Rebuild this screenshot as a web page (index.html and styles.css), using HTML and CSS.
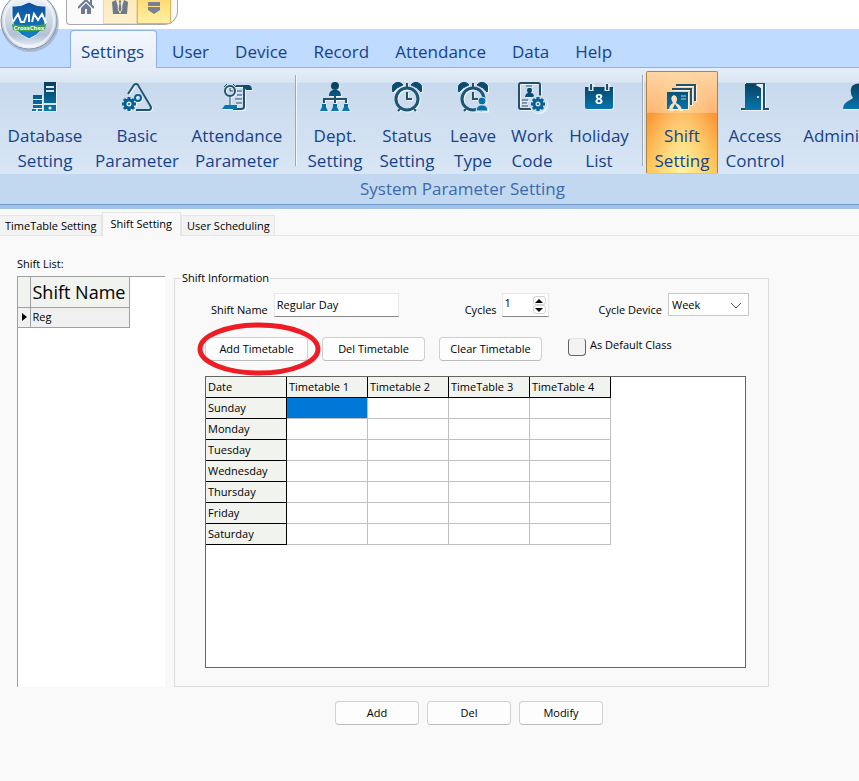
FILE: index.html
```html
<!DOCTYPE html>
<html lang="en">
<head>
    <meta charset="utf-8">
    <title>Shift Setting</title>
    <link rel="stylesheet" href="styles.css">
</head>
<body>
    <svg width="0" height="0" class="defs" aria-hidden="true">
        <defs>
            <linearGradient id="blue" gradientUnits="userSpaceOnUse" x1="0" y1="2" x2="0" y2="30">
                <stop offset="0" stop-color="#08405f"/>
                <stop offset="1" stop-color="#0778b4"/>
            </linearGradient>
            <linearGradient id="shield" x1="0" y1="0" x2="0" y2="1">
                <stop offset="0" stop-color="#0e4f9c"/>
                <stop offset="1" stop-color="#1583c9"/>
            </linearGradient>
            <linearGradient id="orb" x1="0" y1="0" x2="0" y2="1">
                <stop offset="0" stop-color="#f6f8fb"/>
                <stop offset="0.5" stop-color="#ccd6e5"/>
                <stop offset="0.75" stop-color="#b3c1d6"/>
                <stop offset="1" stop-color="#f2f7fc"/>
            </linearGradient>
            <g id="clock">
                <circle cx="15" cy="18" r="11" fill="none" stroke="#1d5674" stroke-width="3"/>
                <path d="M1 11a6 6 0 0 1 10-7q-6 2-10 7zM29 11a6 6 0 0 0-10-7q6 2 10 7z" fill="#0b4b70" stroke="#0b4b70"/>
                <path d="M15 2v4M15 11v7h5M8 28l-2 2M22 28l2 2" fill="none" stroke="#24516a" stroke-width="2"/>
            </g>
            <g id="person">
                <circle cx="6" cy="4" r="4"/>
                <path d="M0 14q0-5 4-6h4q4 1 4 6z"/>
            </g>
            <g id="gear">
                <circle cx="7" cy="7" r="4" fill="none" stroke-width="3"/>
                <path d="M7 0v3M7 11v3M0 7h3M11 7h3M2 2l2 2M10 10l2 2M2 12l2-2M10 4l2-2" stroke-width="3"/>
                <circle cx="7" cy="7" r="1" stroke="none" fill="#076190"/>
            </g>
        </defs>
    </svg>

    <header class="ribbon">
        <div class="quick-bar">
            <button class="orb" aria-label="Application menu">
                <svg width="62" height="54" viewBox="0 0 62 54">
                    <circle cx="30" cy="23" r="29" fill="#8d97a5" opacity="0.5"/>
                    <circle cx="29" cy="21" r="28" fill="url(#orb)" stroke="#8996aa"/>
                    <circle cx="29" cy="21" r="25" fill="none" stroke="#f6f9fc" stroke-width="2" opacity="0.7"/>
                    <path d="M12 6q9 1 17-4 8 5 17 4v10q0 16-17 23-17-7-17-23z" fill="url(#shield)" stroke="#eef4fa"/>
                    <path d="M13 22l5-8 3 8h3l3-8M29 14v8M32 22l2-8 4 6 4-6 4 9" fill="none" stroke="#fff" stroke-width="2"/>
                    <path d="M12 24q17 3 34 0l-1 6q-16 3-32 0z" fill="#3e9f49"/>
                    <text x="29" y="30" text-anchor="middle" class="brand">CrossChex</text>
                </svg>
            </button>
            <div class="quick-tools">
                <button class="quick" aria-label="Home">
                    <svg width="16" height="16" viewBox="0 0 16 16"><path d="M0 9l8-8 8 8" fill="none" stroke="#6b7b96" stroke-width="2"/><path d="M12 1h2v5l-2-2zM3 9l5-5 5 5v6H9v-5H7v5H3z" fill="#6b7b96"/></svg>
                </button>
                <button class="quick warm" aria-label="Staff">
                    <svg width="16" height="16" viewBox="0 0 16 16"><path d="M0 3l4-2 4 14H1zM16 3l-4-2-4 14h7z" fill="#6d7a8d"/><path d="M6 1h4l-1 3 1 6-2 4-2-4 1-6z" fill="#6d7a8d" stroke="#fbe9b8"/></svg>
                </button>
                <button class="quick warm lit" aria-label="Customise">
                    <svg width="14" height="16" viewBox="0 0 14 16"><path d="M1 3h12v4H1zM1 8h12v3l-6 4-6-4z" fill="#788092"/></svg>
                </button>
            </div>
        </div>

        <nav class="menu">
            <a href="#" class="current">Settings</a>
            <a href="#">User</a>
            <a href="#">Device</a>
            <a href="#">Record</a>
            <a href="#">Attendance</a>
            <a href="#">Data</a>
            <a href="#">Help</a>
        </nav>

        <div class="tools">
            <button class="tool w90">
                <svg class="icon" viewBox="0 0 30 32"><path d="M14 1h12v29H14zM3 14h9v4H3zM3 19h9v4H3zM3 24h9v3H3zM2 28h4v2H2zM8 28h4v2H8z" fill="url(#blue)"/><path d="M16 6h8M16 10h8M14 23h12" stroke="#d9e6f2" stroke-width="2"/><circle cx="20" cy="27" r="1.5" fill="#fff"/></svg>
                <span>Database<br>Setting</span>
            </button>
            <button class="tool w94">
                <svg class="icon" viewBox="0 0 30 32"><path d="M6 13l6-9q2-2 4 0l13 22q0 3-2 3H14" fill="none" stroke="#1d5674" stroke-width="2"/><use href="#gear" y="16" stroke="#076190"/><circle cx="16" cy="17" r="3" fill="none" stroke="#076190" stroke-width="2"/></svg>
                <span>Basic<br>Parameter</span>
            </button>
            <button class="tool w106">
                <svg class="icon" viewBox="0 0 30 32"><path d="M14 5h12M22 6v20q0 2-3 2h-8" fill="none" stroke="#24516a" stroke-width="2"/><path d="M21 4h6q3 1 3 5h-6z" fill="#0b4b70"/><path d="M0 28l3-4h12v4z" fill="#0778b4"/><circle cx="8" cy="10" r="5" fill="none" stroke="#24516a" stroke-width="2"/><path d="M2 6l3-3M14 6l-3-3M8 7v3h3M8 16v8M15 10h5M15 14h5M13 18h7M14 22h6" fill="none" stroke="#24516a" stroke-width="1"/></svg>
                <span>Attendance<br>Parameter</span>
            </button>
            <i class="rule"></i>
            <button class="tool w72">
                <svg class="icon" viewBox="0 0 30 32"><g fill="url(#blue)"><use href="#person" x="9" y="1"/><path d="M0 30l2-4v-3h4v3l2 4zM11 30l2-4v-3h4v3l2 4zM22 30l2-4v-3h4v3l2 4z"/></g><path d="M4 22v-4h22v4M15 14v8" fill="none" stroke="#24516a" stroke-width="2"/></svg>
                <span>Dept.<br>Setting</span>
            </button>
            <button class="tool w72">
                <svg class="icon" viewBox="0 0 30 32"><use href="#clock"/></svg>
                <span>Status<br>Setting</span>
            </button>
            <button class="tool w60">
                <svg class="icon" viewBox="0 0 30 32"><use href="#clock"/><g fill="#0772a9" stroke="#d2dfef"><use href="#person" x="18" y="16"/></g></svg>
                <span>Leave<br>Type</span>
            </button>
            <button class="tool w58">
                <svg class="icon" viewBox="0 0 30 32"><path d="M23 15V4q0-2-2-2H4Q2 2 2 4v22q0 2 2 2h10" fill="none" stroke="#24516a" stroke-width="2"/><path d="M9 5h6M5 19h6M5 22h5M5 25h6" stroke="#24516a" stroke-width="1"/><path d="M8 16q1-4 3-4-2-3 0-5h3q2 2 0 5 3 0 3 4z" fill="#0b4b70"/><circle cx="21" cy="23" r="9" fill="#cbdcee"/><use href="#gear" x="14" y="16" stroke="#076190"/></svg>
                <span>Work<br>Code</span>
            </button>
            <button class="tool w76">
                <svg class="icon" viewBox="0 0 30 32"><path d="M1 6h28v20q0 2-2 2H3q-2 0-2-2z" fill="url(#blue)"/><path d="M7 2v8M23 2v8" stroke="#dce8f5" stroke-width="5"/><path d="M7 3v6M23 3v6" stroke="#24516a" stroke-width="2"/><text x="15" y="23" text-anchor="middle" class="day">8</text></svg>
                <span>Holiday<br>List</span>
            </button>
            <i class="rule"></i>
            <button class="tool w72 active">
                <svg class="icon" viewBox="0 0 30 32"><path d="M9 4h19v16M5 8h19v16" fill="none" stroke="#24516a" stroke-width="2"/><path d="M0 11h21v17H0z" fill="url(#blue)"/><path d="M14 15h5M14 18h5" stroke="#bcd3e2"/><path d="M2 29q0-5 4-7-4-6 1-8 5 2 2 8 5 2 6 7h-3l-4-6-3 6z" fill="#fde0b7"/></svg>
                <span>Shift<br>Setting</span>
            </button>
            <button class="tool w74">
                <svg class="icon" viewBox="0 0 30 32"><path d="M6 3h18v25h5M1 28h5" fill="none" stroke="#24516a" stroke-width="2"/><path d="M5 3h9l7 4v22H5z" fill="url(#blue)"/><path d="M16 3h7v24h-2V7z" fill="#e9f0f8"/><circle cx="18" cy="16" r="1" fill="#fff"/></svg>
                <span>Access<br>Control</span>
            </button>
            <button class="tool w132">
                <svg class="icon" viewBox="0 0 30 32"><path d="M0 28q0-6 7-9l3-2q-4-6-1-12 6-5 12 0 3 6-1 12l3 2q7 3 7 9z" fill="url(#blue)"/></svg>
                <span>Administrator</span>
            </button>
        </div>
        <div class="group-name">System Parameter Setting</div>
    </header>

    <nav class="tabs">
        <a href="#">TimeTable Setting</a>
        <a href="#" class="open">Shift Setting</a>
        <a href="#">User Scheduling</a>
    </nav>

    <main class="page">
        <section class="shift-list">
            <h2>Shift List:</h2>
            <div class="list-box">
                <table class="shifts">
                    <tr><th class="mark"></th><th>Shift Name</th></tr>
                    <tr><td class="mark"><svg width="5" height="8" viewBox="0 0 5 8"><path d="M0 0l5 4-5 4z"/></svg></td><td>Reg</td></tr>
                </table>
            </div>
        </section>

        <section class="detail">
            <fieldset class="info">
                <legend>Shift Information</legend>
                <div class="fields">
                    <label for="shiftName">Shift Name</label>
                    <input type="text" id="shiftName" class="name-box" value="Regular Day">
                    <label for="cycles" class="cycles-label">Cycles</label>
                    <div class="spin">
                        <input type="text" id="cycles" inputmode="numeric" value="1">
                        <div class="spin-buttons">
                            <button aria-label="More"><svg width="8" height="4" viewBox="0 0 8 4"><path d="M0 4l4-4 4 4z"/></svg></button>
                            <button aria-label="Less"><svg width="8" height="4" viewBox="0 0 8 4"><path d="M0 0l4 4 4-4z"/></svg></button>
                        </div>
                    </div>
                    <label for="device" class="device-label">Cycle Device</label>
                    <div class="picker">
                        <select id="device">
                            <option>Week</option>
                        </select>
                        <svg width="12" height="7" viewBox="0 0 12 7"><path d="M1 1l5 5 5-5" fill="none" stroke="#555"/></svg>
                    </div>
                </div>
                <div class="actions">
                    <div class="marked">
                        <button class="btn wide">Add Timetable</button>
                        <svg class="ring" viewBox="0 0 124 54"><ellipse cx="62" cy="27" rx="59" ry="24" fill="none" stroke="#ee1c24" stroke-width="5"/></svg>
                    </div>
                    <button class="btn wide">Del Timetable</button>
                    <button class="btn wide">Clear Timetable</button>
                    <label class="check"><input type="checkbox"><span>As Default Class</span></label>
                </div>
                <div class="grid-box">
                    <table class="week">
                        <tr><th>Date</th><th>Timetable 1</th><th>Timetable 2</th><th>TimeTable 3</th><th>TimeTable 4</th></tr>
                        <tr><th>Sunday</th><td class="picked"></td><td></td><td></td><td></td></tr>
                        <tr><th>Monday</th><td></td><td></td><td></td><td></td></tr>
                        <tr><th>Tuesday</th><td></td><td></td><td></td><td></td></tr>
                        <tr><th>Wednesday</th><td></td><td></td><td></td><td></td></tr>
                        <tr><th>Thursday</th><td></td><td></td><td></td><td></td></tr>
                        <tr><th>Friday</th><td></td><td></td><td></td><td></td></tr>
                        <tr><th>Saturday</th><td></td><td></td><td></td><td></td></tr>
                    </table>
                </div>
            </fieldset>
            <div class="footer">
                <button class="btn">Add</button>
                <button class="btn">Del</button>
                <button class="btn">Modify</button>
            </div>
        </section>
    </main>
</body>
</html>
```
FILE: styles.css
```css
* {
    box-sizing: border-box;
}
body {
    margin: 0;
    min-height: 100vh;
    overflow: hidden;
    background: #f9f9f9;
    font-family: "Open Sans", sans-serif;
    font-size: 11px;
    line-height: 16px;
    color: #000;
}
button, input, select {
    font: inherit;
    color: inherit;
    margin: 0;
}
a {
    color: inherit;
    text-decoration: none;
}
.defs {
    position: absolute;
}

/* ribbon */
.ribbon {
    position: relative;
    color: #15428b;
    font-size: 17px;
    line-height: 25px;
    border-bottom: 4px solid #a3c2ea;
    overflow: hidden;
}
.quick-bar {
    height: 29px;
    padding-left: 66px;
    background: #fff;
}
.orb {
    position: absolute;
    left: 0;
    top: 0;
    z-index: 2;
    padding: 0;
    border: 0;
    background: none;
}
.orb svg {
    display: block;
}
.brand {
    font-size: 6px;
    font-weight: bold;
    fill: #fff;
}
.quick-tools {
    display: inline-flex;
    height: 25px;
    padding: 0 6px 0 2px;
    border: 1px solid #a9a9a9;
    border-top: 0;
    border-radius: 0 0 14px 4px;
    background: #fafafa;
}
.quick {
    width: 34px;
    padding: 0;
    border: 0;
    background: none;
}
.quick svg {
    display: block;
    margin: -10px auto 0;
}
.warm {
    background: linear-gradient(#fbe9b8, #fdf1cf);
    border: 1px solid #efd9a0;
    border-top: 0;
}
.lit {
    background: linear-gradient(#ffdc74, #fff0a8);
    border-color: #dcb455;
}
.menu {
    display: flex;
    height: 39px;
    padding: 1px 0 0 70px;
    background: #bfdbff;
    border-bottom: 1px solid #8db2e3;
}
.menu a {
    padding: 9px 13px 0;
}
.menu a.current {
    padding: 8px 12px 0 10px;
    margin: 0 2px -1px 0;
    border: 1px solid #8db2e3;
    border-bottom: 0;
    border-radius: 4px 4px 0 0;
    background: linear-gradient(#f4f8fd, #e3ecf7);
}
.tools {
    display: flex;
    height: 106px;
    padding-top: 3px;
    background: linear-gradient(#e6eef8, #dae6f4 14px, #c9d9ed 15px, #d8e6f5);
}
.tool {
    flex: none;
    display: flex;
    flex-direction: column;
    align-items: center;
    height: 103px;
    padding: 10px 0 0;
    border: 0;
    background: none;
    white-space: nowrap;
}
.icon {
    flex: none;
    width: 30px;
    height: 32px;
    margin-bottom: 10px;
    filter: drop-shadow(1px 1px 0 rgba(255,255,255,0.7));
}
.day {
    font-weight: bold;
    font-size: 14px;
    fill: #fff;
}
.w58 { width: 58px; }
.w60 { width: 60px; }
.w72 { width: 72px; }
.w74 { width: 74px; }
.w76 { width: 76px; }
.w90 { width: 90px; }
.w94 { width: 94px; }
.w106 { width: 106px; }
.w132 { width: 132px; }
.rule {
    flex: none;
    width: 2px;
    height: 91px;
    margin: 4px 2px 0 5px;
    border-left: 1px solid #9da7b5;
    border-right: 1px solid #f2f6fb;
}
.active {
    padding-top: 9px;
    border: 1px solid #b0863f;
    border-bottom-color: #fbc83c;
    border-radius: 2px;
    background: radial-gradient(ellipse at bottom, rgba(255,248,170,0.9), rgba(255,220,110,0) 75%), linear-gradient(#ffd6a5, #fdb573 40%, #fb9637 41%, #fec554);
}
.group-name {
    height: 31px;
    padding: 2px 0 0 66px;
    text-align: center;
    color: #3e6aaa;
    background: #c1d8f0;
    border-bottom: 1px solid #6f9dcc;
}

/* page tabs */
.tabs {
    display: flex;
    align-items: flex-end;
    height: 27px;
    border-bottom: 1px solid #e5e5e5;
}
.tabs a {
    height: 20px;
    padding: 2px 4px 0 5px;
    border: 1px solid #e5e5e5;
    border-bottom: 0;
    background: #f3f3f3;
}
.tabs a:first-child {
    padding-right: 5px;
    border-left: 0;
}
.tabs .open {
    height: 24px;
    margin-bottom: -1px;
    padding: 3px 8px 0 7px;
    background: #f9f9f9;
}

/* content */
.page {
    display: flex;
    gap: 9px;
    padding: 20px 17px 0;
}
.shift-list {
    width: 148px;
}
.shift-list h2 {
    margin: 0 0 4px;
    font-size: 11px;
    font-weight: normal;
}
.list-box {
    height: 411px;
    border-top: 1px solid #a0a0a0;
    border-left: 1px solid #a0a0a0;
    background: #fff;
}
table {
    border-collapse: collapse;
}
th, td {
    font-weight: normal;
    text-align: left;
    padding: 0 2px;
}
.shifts {
    width: 112px;
    background: #f0f0f0;
}
.shifts th, .shifts td {
    height: 20px;
    border: 1px solid #a0a0a0;
    border-top: 0;
    border-left: 0;
}
.shifts th {
    height: 30px;
    font-size: 18px;
    background: #f1f3ee;
    white-space: nowrap;
}
.shifts .mark {
    width: 12px;
    padding-left: 4px;
}
.detail {
    width: 595px;
    padding-top: 14px;
}
.info {
    height: 417px;
    margin: 0;
    padding: 7px 22px 0 30px;
    border: 1px solid #dcdcdc;
}
.info legend {
    margin-left: -24px;
    padding: 0 1px;
}
.fields {
    display: flex;
    height: 24px;
    padding-left: 6px;
}
.fields label {
    padding-top: 9px;
    margin-right: 6px;
    white-space: nowrap;
}
.name-box, .spin {
    height: 24px;
    border: 1px solid #e8e8e8;
    border-bottom-color: #868686;
    background: #fff;
}
.name-box {
    width: 125px;
    padding: 0 2px 2px;
}
.fields .cycles-label {
    margin-left: auto;
    margin-right: 5px;
}
.spin {
    display: flex;
    width: 47px;
}
.spin input {
    width: 30px;
    padding: 0 2px 4px;
    border: 0;
    background: none;
}
.spin-buttons {
    display: flex;
    flex-direction: column;
    padding-top: 2px;
}
.spin button {
    display: grid;
    place-items: center;
    width: 13px;
    height: 9px;
    padding: 0;
    border: 1px solid #d5d5d5;
    border-radius: 3px;
    background: #fff;
}
.fields .device-label {
    margin-left: 50px;
}
.picker {
    position: relative;
    margin-right: -3px;
}
.picker select {
    width: 81px;
    height: 23px;
    padding: 0 3px;
    border: 1px solid #c8c8c8;
    background: #fff;
    appearance: none;
}
.picker svg {
    position: absolute;
    right: 7px;
    top: 9px;
    pointer-events: none;
}
.actions {
    display: flex;
    gap: 14px;
    margin: 20px 0 15px;
}
.btn {
    width: 84px;
    height: 24px;
    padding: 0;
    border: 1px solid #d0d0d0;
    border-bottom-color: #bcbcbc;
    border-radius: 4px;
    background: #fdfdfd;
}
.wide {
    width: 103px;
}
.marked {
    position: relative;
}
.ring {
    position: absolute;
    left: -8px;
    top: -15px;
    width: 124px;
    height: 54px;
    pointer-events: none;
}
.check {
    display: flex;
    gap: 4px;
    margin-left: 12px;
}
.check input {
    width: 18px;
    height: 18px;
    margin-top: 1px;
    border: 1px solid #626262;
    border-top-color: #e3e3e3;
    border-radius: 4px;
    background: #f3f3f3;
    appearance: none;
}
.grid-box {
    width: 541px;
    height: 292px;
    border: 1px solid #646464;
    background: #fff;
}
.week {
    table-layout: fixed;
    width: 405px;
    border-collapse: separate;
    border-spacing: 0;
}
.week th, .week td {
    height: 21px;
    border: 0 solid #c0c0c0;
    border-width: 0 1px 1px 0;
}
.week th {
    background: #f1f3ee;
    border-color: #000;
}
.week .picked {
    background: #0078d7;
}
.footer {
    display: flex;
    gap: 8px;
    padding: 14px 0 0 161px;
}
```
